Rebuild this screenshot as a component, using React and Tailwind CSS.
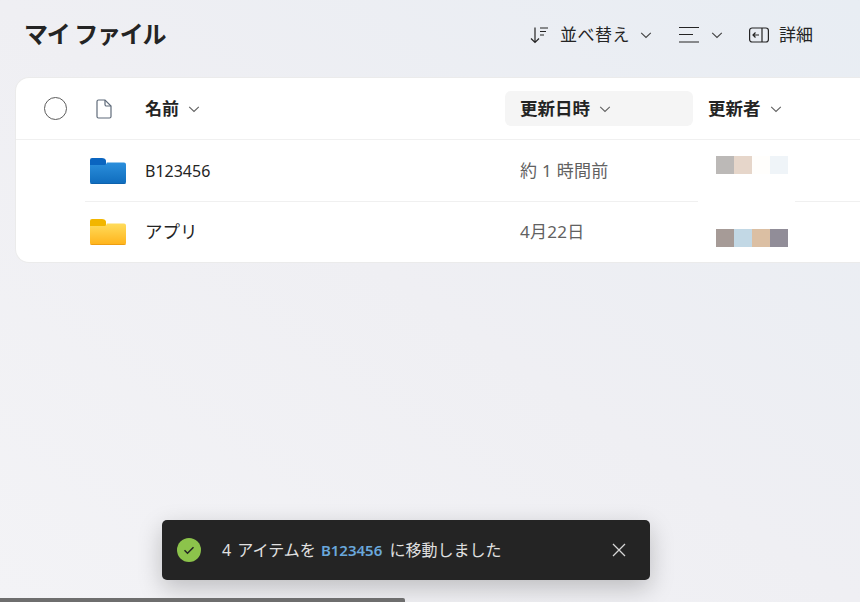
import React from 'react';

const Chevron = ({ className = 'w-[12px] h-[12px] text-[#616161]' }) => (
  <svg className={className} viewBox="0 0 12 12" fill="none" stroke="currentColor" strokeWidth="1.1">
    <path d="M1.200 3.800 6 8.400l4.800-4.600" />
  </svg>
);

const Folder = ({ tab, top, bottom, edge, id }) => (
  <svg className="w-[36px] h-[26px]" viewBox="0 0 36 26">
    <defs>
      <linearGradient id={id} x1="0" y1="0" x2="0" y2="1">
        <stop offset="0" stopColor={top} />
        <stop offset="1" stopColor={bottom} />
      </linearGradient>
    </defs>
    <path d="M0 2a2 2 0 0 1 2-2h10c2 0 3 .7 4 2.200V9H0z" fill={tab} />
    <path d="M0 7h14c1.500 0 2.200-.6 2.800-2.500H34a2 2 0 0 1 2 2V24a2 2 0 0 1-2 2H2a2 2 0 0 1-2-2z" fill={`url(#${id})`} />
    <path d="M0 24.200a1.500 1.500 0 0 0 1.500 1h33a1.500 1.500 0 0 0 1.500-1V24a2 2 0 0 1-2 2H2a2 2 0 0 1-2-2z" fill={edge} />
  </svg>
);

const Mosaic = ({ colors }) => (
  <div className="flex">
    {colors.map((c, i) => (
      <div key={i} className="w-[18px] h-[18px]" style={{ backgroundColor: c }} />
    ))}
  </div>
);

const Row = ({ icon, name, nameClass, date, colors, mosaicClass, height }) => (
  <div className={`${height} grid grid-cols-[129px_360px_1fr] items-center`}>
    <div className="pl-[74px] flex">{icon}</div>
    <div className={`text-[#242424] ${nameClass}`}>{name}</div>
    <div className="flex items-center">
      <div className="w-[188px] pl-[15px] text-[17px] tracking-[0.3px] text-[#616161]">{date}</div>
      <div className={`pl-[23px] ${mosaicClass}`}>
        <Mosaic colors={colors} />
      </div>
    </div>
  </div>
);

export default function App() {
  return (
    <div
      className="relative h-[602px] w-[860px] overflow-hidden bg-gradient-to-tr from-[#f3f3f6] via-[#efeff3] to-[#e8edf3]"
      style={{ fontFamily: '"Noto Sans", "Noto Sans CJK JP", sans-serif' }}
    >
      {/* Title and toolbar */}
      <header className="h-[77px] flex items-center pl-[24px] pb-[9px]">
        <h1 className="w-[505px] text-[24px] leading-[32px] font-semibold tracking-[-1.3px] text-[#242424]">マイ ファイル</h1>
        <div className="flex items-center mt-[2px] text-[#242424] text-[17px]">
          <svg className="w-[20px] h-[20px]" viewBox="0 0 20 20" fill="none" stroke="currentColor" strokeWidth="1.2">
            <path d="M6 2.500v15M2 13.500l4 4 4-4M11 3h8M11 6.500h6M11 10h4" />
          </svg>
          <span className="ml-[11px] tracking-[0.5px]">並べ替え</span>
          <Chevron className="ml-[10px] w-[12px] h-[12px] text-[#424242]" />
          <svg className="ml-[27px] w-[20px] h-[20px]" viewBox="0 0 20 20" fill="none" stroke="currentColor" strokeWidth="1.2">
            <path d="M0 2.500h20M0 9.500h14M0 17h20" />
          </svg>
          <Chevron className="ml-[12px] w-[12px] h-[12px] text-[#424242]" />
          <svg className="ml-[26px] w-[20px] h-[20px]" viewBox="0 0 20 20" fill="none" stroke="currentColor" strokeWidth="1.2">
            <rect x="0.6" y="3" width="18.8" height="14" rx="2.5" />
            <path d="M13 3v14M10 10H4M6.500 7.500 4 10l2.500 2.500" />
          </svg>
          <span className="ml-[10px]">詳細</span>
        </div>
      </header>

      {/* File list card */}
      <section className="ml-[15px] w-[900px] h-[186px] bg-white rounded-l-[14px] border border-[#ebebeb] border-r-0">
        <div className="h-[62px] grid grid-cols-[129px_360px_1fr] items-center border-b border-[#f0f0f0]">
          <div className="flex items-center pl-[28px]">
            <div className="w-[23px] h-[23px] rounded-full border-[1.5px] border-[#5c5c5c]" />
            <svg className="ml-[28px] w-[18px] h-[20px]" viewBox="0 0 18 20" fill="none" stroke="#5f6b7a" strokeWidth="1.2">
              <path d="M2 2.500A1.500 1.500 0 0 1 3.500 1H10l6 6v10.500a1.500 1.500 0 0 1-1.500 1.500h-11A1.500 1.500 0 0 1 2 17.500z" />
              <path d="M10 1v4.500A1.500 1.500 0 0 0 11.500 7H16" />
            </svg>
          </div>
          <div className="flex items-center gap-[9px] text-[17px] font-bold text-[#242424]">
            名前
            <Chevron />
          </div>
          <div className="flex items-center">
            <div className="w-[188px] h-[35px] pl-[15px] flex items-center gap-[9px] rounded-[6px] bg-[#f5f5f5] text-[17.500px] font-bold text-[#242424]">
              更新日時
              <Chevron />
            </div>
            <div className="pl-[15px] flex items-center gap-[9px] text-[17.500px] font-bold text-[#242424]">
              更新者
              <Chevron />
            </div>
          </div>
        </div>

        <Row
          height="h-[61px]"
          icon={<Folder id="blue" tab="#0a65c0" top="#2b8fdc" bottom="#0f6cbd" edge="#0c5fa8" />}
          name="B123456"
          nameClass="text-[16px]"
          date="約 1 時間前"
          colors={['#bcb9b7', '#e6d6ca', '#fffefc', '#eff4f8']}
          mosaicClass="-mt-[11px]"
        />
        <div className="flex ml-[69px] h-px">
          <div className="w-[613px] bg-[#f0f0f0]" />
          <div className="w-[97px]" />
          <div className="flex-1 bg-[#f0f0f0]" />
        </div>
        <Row
          height="h-[60px]"
          icon={<Folder id="yellow" tab="#f2b600" top="#ffdc5c" bottom="#ffb31a" edge="#e8970f" />}
          name="アプリ"
          nameClass="text-[17.500px] pb-[2px]"
          date="4月22日"
          colors={['#a69b97', '#c2d8e5', '#dbbfa3', '#918d98']}
          mosaicClass="mt-[11px]"
        />
      </section>

      {/* Toast */}
      <div className="absolute left-[162px] top-[520px] w-[488px] h-[60px] flex items-center rounded-[5px] bg-[#242424] pl-[15px] pr-[24px] text-[16px] text-[#e0e0e0] shadow-[0_8px_24px_rgba(0,0,0,0.22)]">
        <svg className="w-[24px] h-[24px]" viewBox="0 0 24 24">
          <circle cx="12" cy="12" r="12" fill="#8cc34b" />
          <path d="M7.500 12.200l3 3 6-6" fill="none" stroke="#242424" strokeWidth="1.5" />
        </svg>
        <span className="ml-[21px] flex-1">
          4 <span className="ml-[2px]">アイテムを</span> <span className="ml-[1px] mr-[3px] text-[15px] font-semibold text-[#6aa8dc]">B123456</span> に移動しました
        </span>
        <svg className="w-[14px] h-[14px]" viewBox="0 0 14 14" fill="none" stroke="#d6d6d6" strokeWidth="1.3">
          <path d="M1 1l12 12M13 1 1 13" />
        </svg>
      </div>

      {/* Scroll bar */}
      <div className="absolute left-0 bottom-0 w-[405px] h-[4px] rounded-tr-[2px] bg-[#6e6e6e]" />
    </div>
  );
}
